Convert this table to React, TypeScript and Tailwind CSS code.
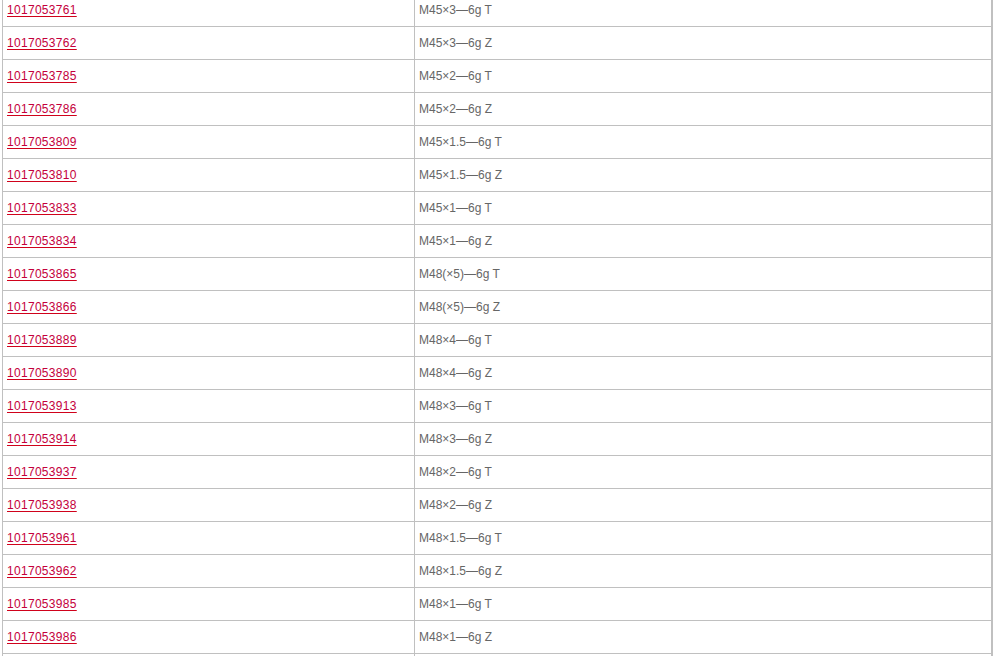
const rows: [string, string][] = [
  ["1017053761", "M45×3—6g T"],
  ["1017053762", "M45×3—6g Z"],
  ["1017053785", "M45×2—6g T"],
  ["1017053786", "M45×2—6g Z"],
  ["1017053809", "M45×1.5—6g T"],
  ["1017053810", "M45×1.5—6g Z"],
  ["1017053833", "M45×1—6g T"],
  ["1017053834", "M45×1—6g Z"],
  ["1017053865", "M48(×5)—6g T"],
  ["1017053866", "M48(×5)—6g Z"],
  ["1017053889", "M48×4—6g T"],
  ["1017053890", "M48×4—6g Z"],
  ["1017053913", "M48×3—6g T"],
  ["1017053914", "M48×3—6g Z"],
  ["1017053937", "M48×2—6g T"],
  ["1017053938", "M48×2—6g Z"],
  ["1017053961", "M48×1.5—6g T"],
  ["1017053962", "M48×1.5—6g Z"],
  ["1017053985", "M48×1—6g T"],
  ["1017053986", "M48×1—6g Z"],
];

export default function App() {
  return (
    <div className="h-[656px] overflow-hidden bg-white font-['Liberation_Sans',Arial,sans-serif] text-[12px]">
      <div className="ml-[2px] -mt-[6px] w-[991px] border-l border-r-2 border-[#c0c0c0]">
        {rows.map(([code, spec]) => (
          <div key={code} className="flex h-[33px] border-b border-[#c0c0c0]">
            <div className="flex w-[411px] items-center pl-1">
              <a href="#" className="tracking-[0.3px] text-[#c4003c] underline decoration-[#d0021b] underline-offset-2">
                {code}
              </a>
            </div>
            <div className="flex flex-1 items-center border-l border-[#c0c0c0] pl-1 text-[#666]">
              {spec}
            </div>
          </div>
        ))}
        {/* next row, only its top edge shows */}
        <div className="flex h-[33px]">
          <div className="w-[411px]" />
          <div className="flex-1 border-l border-[#c0c0c0]" />
        </div>
      </div>
    </div>
  );
}
